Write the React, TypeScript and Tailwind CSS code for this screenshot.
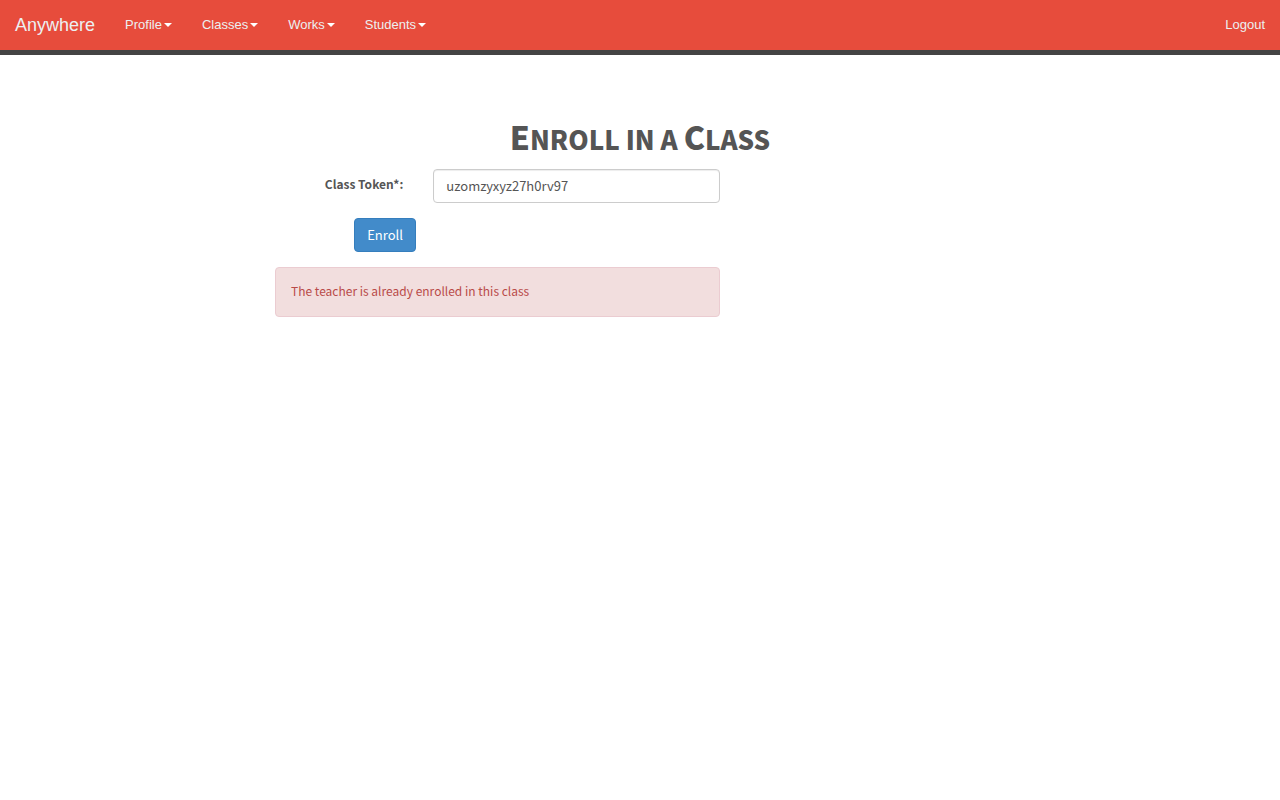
import React, { useState } from "react";

const menus = ["Profile", "Classes", "Works", "Students"];

function Caret() {
  return (
    <svg className="ml-0.5 h-1 w-2 text-white" viewBox="0 0 8 4" fill="currentColor" aria-hidden="true">
      <path d="M0 0h8L4 4z" />
    </svg>
  );
}

function NavBar() {
  return (
    <nav className="flex min-h-[55px] flex-wrap items-center border-b-[5px] border-[#444444] bg-[#e74c3c] font-['Liberation_Sans',Arial,sans-serif] text-[13px] leading-5 text-[#ecf0f1]">
      <a href="#home" className="px-[15px] text-lg leading-5">
        Anywhere
      </a>
      <ul className="flex">
        {menus.map((name) => (
          <li key={name}>
            <a href={`#${name.toLowerCase()}`} className="flex items-center px-[15px] py-[15px]">
              {name}
              <Caret />
            </a>
          </li>
        ))}
      </ul>
      <a href="#logout" className="ml-auto px-[15px] py-[15px]">
        Logout
      </a>
    </nav>
  );
}

export default function App() {
  const [token, setToken] = useState("uzomzyxyz27h0rv97");

  return (
    <div className="min-h-screen bg-white font-['Noto_Sans_CJK_SC',sans-serif] text-[13px] leading-[18px] text-[#555555]">
      <NavBar />
      <main className="mx-auto max-w-[760px] pt-[61px]">
        <h1 className="text-center text-[26px] leading-[40px] font-black uppercase">
          <span className="text-[32px]">E</span>nroll in a <span className="text-[32px]">C</span>lass
        </h1>
        <form className="mt-2.5 max-w-[475px]" onSubmit={(e) => e.preventDefault()}>
          <div className="grid grid-cols-3">
            <label htmlFor="token" className="px-[15px] pt-1.5 text-right text-xs leading-[18px] font-bold">
              Class Token*:
            </label>
            <div className="col-span-2 px-[15px]">
              <input
                id="token"
                type="text"
                value={token}
                onChange={(e) => setToken(e.target.value)}
                className="block h-[34px] w-full rounded border border-[#cccccc] bg-white px-3 pt-1 pb-1.5 text-[13px] leading-5 shadow-[inset_0_1px_1px_rgba(0,0,0,0.075)] outline-none focus:border-[#66afe9]"
              />
            </div>
          </div>
          <div className="mt-[15px] grid grid-cols-6">
            <div className="col-span-5 col-start-2 px-[15px]">
              <button
                type="submit"
                className="block h-[34px] cursor-pointer rounded border border-[#357ebd] bg-[#428bca] px-3 text-[13px] leading-5 text-white"
              >
                Enroll
              </button>
            </div>
          </div>
          <div className="mt-[15px] px-[15px]">
            <div role="alert" className="rounded border border-[#ebccd1] bg-[#f2dede] px-[15px] pt-3.5 pb-4 text-xs leading-[18px] text-[#b94a48]">
              The teacher is already enrolled in this class
            </div>
          </div>
        </form>
      </main>
    </div>
  );
}
